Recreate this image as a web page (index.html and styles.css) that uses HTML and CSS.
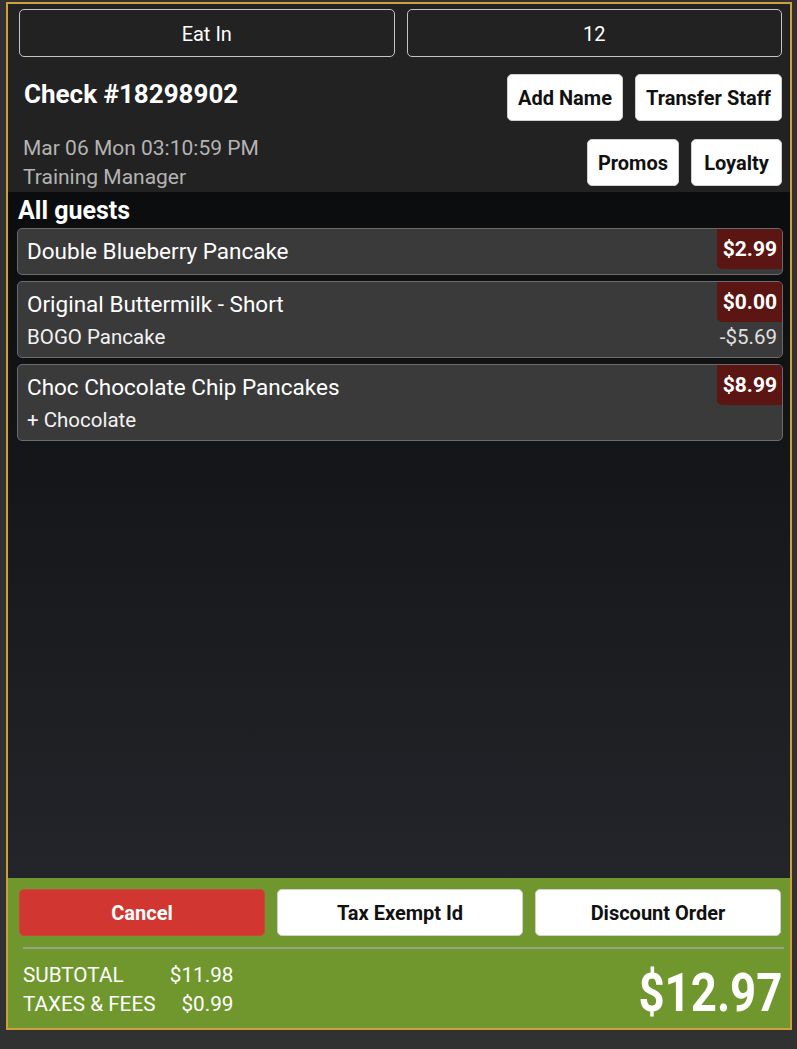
FILE: index.html
```html
<!DOCTYPE html>
<html lang="en">
<head>
    <meta charset="UTF-8">
    <meta name="viewport" content="width=device-width, initial-scale=1.0">
    <title>Check #18298902</title>
    <link rel="stylesheet" href="styles.css">
</head>
<body>
    <div class="frame">
        <div class="header">
            <div class="mode-row">
                <button class="outline-button">Eat In</button>
                <button class="outline-button">12</button>
            </div>

            <div class="title-row">
                <div class="check-title">Check #18298902</div>
                <div class="actions">
                    <button class="white-button">Add Name</button>
                    <button class="white-button">Transfer Staff</button>
                </div>
            </div>

            <div class="info-row">
                <div class="check-info">
                    <div>Mar 06 Mon 03:10:59 PM</div>
                    <div>Training Manager</div>
                </div>
                <div class="actions">
                    <button class="white-button">Promos</button>
                    <button class="white-button">Loyalty</button>
                </div>
            </div>
        </div>

        <!-- Позиции заказа -->
        <div class="order-list">
            <div class="guests-title">All guests</div>

            <div class="item">
                <div class="item-main">
                    <span class="item-name">Double Blueberry Pancake</span>
                    <span class="price">$2.99</span>
                </div>
            </div>

            <div class="item">
                <div class="item-main">
                    <span class="item-name">Original Buttermilk - Short</span>
                    <span class="price">$0.00</span>
                </div>
                <div class="item-sub">
                    <span>BOGO Pancake</span>
                    <span class="discount">-$5.69</span>
                </div>
            </div>

            <div class="item">
                <div class="item-main">
                    <span class="item-name">Choc Chocolate Chip Pancakes</span>
                    <span class="price">$8.99</span>
                </div>
                <div class="item-sub">
                    <span>+ Chocolate</span>
                </div>
            </div>
        </div>

        <div class="footer">
            <div class="footer-buttons">
                <button class="white-button cancel">Cancel</button>
                <button class="white-button">Tax Exempt Id</button>
                <button class="white-button">Discount Order</button>
            </div>
            <div class="totals">
                <div class="sums">
                    <span>SUBTOTAL</span><span class="sum-value">$11.98</span>
                    <span>TAXES &amp; FEES</span><span class="sum-value">$0.99</span>
                </div>
                <div class="grand-total">$12.97</div>
            </div>
        </div>
    </div>
</body>
</html>
```

FILE: styles.css
```css
body {
    font-family: Roboto, "Liberation Sans", sans-serif;
    background-color: #313131;
    color: #ffffff;
    margin: 0;
    height: 1049px;
    overflow: hidden;
}
button {
    font-family: inherit;
    cursor: pointer;
}
.frame {
    margin: 2px 0 0 6px;
    width: 782px;
    height: 1024px;
    border: 2px solid #cf9f3c;
    display: flex;
    flex-direction: column;
    background: #222222;
}
.header {
    background: #222222;
    padding: 5px 8px 0 11px;
}
.mode-row {
    display: flex;
    gap: 12px;
}
.outline-button {
    flex: 1;
    height: 48px;
    padding-top: 2px;
    background: #222222;
    color: #ffffff;
    border: 1px solid #c4c4c4;
    border-radius: 5px;
    font-size: 20px;
}
.title-row {
    display: flex;
    align-items: center;
    justify-content: space-between;
    margin-top: 17px;
}
.check-title {
    font-size: 26px;
    font-weight: bold;
    padding-left: 5px;
    margin-top: -8px;
}
.actions {
    display: flex;
    gap: 12px;
}
.white-button {
    height: 47px;
    min-width: 91px;
    padding: 0 10px;
    background: #ffffff;
    color: #111111;
    border: 1px solid #d0d0d0;
    border-radius: 5px;
    font-size: 20px;
    font-weight: bold;
}
.info-row {
    display: flex;
    align-items: center;
    justify-content: space-between;
    margin-top: 12px;
    height: 59px;
}
.check-info {
    color: #b4b4b4;
    font-size: 21px;
    line-height: 29px;
    padding-left: 4px;
}
.order-list {
    flex: 1;
    background: linear-gradient(#0b0c0d, #23252a);
    padding: 4px 7px 0 9px;
}
.guests-title {
    font-size: 25px;
    font-weight: bold;
    line-height: 30px;
    padding-left: 1px;
    margin-bottom: 2px;
}
.item {
    background: #3a3a3a;
    border: 1px solid #6b6b6b;
    border-radius: 5px;
    margin-bottom: 6px;
    padding-bottom: 5px;
    overflow: hidden;
}
.item-main {
    display: flex;
    justify-content: space-between;
    align-items: center;
    height: 40px;
}
.item-name {
    font-size: 22.5px;
    padding-left: 9px;
    padding-top: 3px;
}
.price {
    align-self: flex-start;
    height: 40px;
    line-height: 40px;
    padding: 0 5px 0 6px;
    background: #5b1512;
    border-radius: 0 0 0 5px;
    font-size: 21px;
    font-weight: bold;
}
.item-sub {
    display: flex;
    justify-content: space-between;
    align-items: center;
    height: 30px;
    padding: 0 5px 0 9px;
    font-size: 20.5px;
    color: #f2f2f2;
}
.discount {
    color: #e0e0e0;
}
.footer {
    height: 150px;
    background: #6f972d;
    padding: 11px 9px 0 11px;
    box-sizing: border-box;
}
.footer-buttons {
    display: flex;
    gap: 12px;
}
.footer-buttons .white-button {
    flex: 1;
}
.cancel {
    background: #d13730;
    border-color: #c9473c;
    color: #ffffff;
}
.totals {
    margin: 11px -3px 0 4px;
    border-top: 2px solid #9ba188;
    display: flex;
    justify-content: space-between;
    align-items: center;
    padding-top: 7px;
}
.sums {
    display: grid;
    grid-template-columns: auto 78px;
    font-size: 20.7px;
    line-height: 29px;
}
.sum-value {
    text-align: right;
}
.grand-total {
    font-size: 53px;
    font-weight: bold;
    transform: scaleX(0.86);
    transform-origin: right center;
    margin-right: 2px;
    margin-top: 6px;
}
```
